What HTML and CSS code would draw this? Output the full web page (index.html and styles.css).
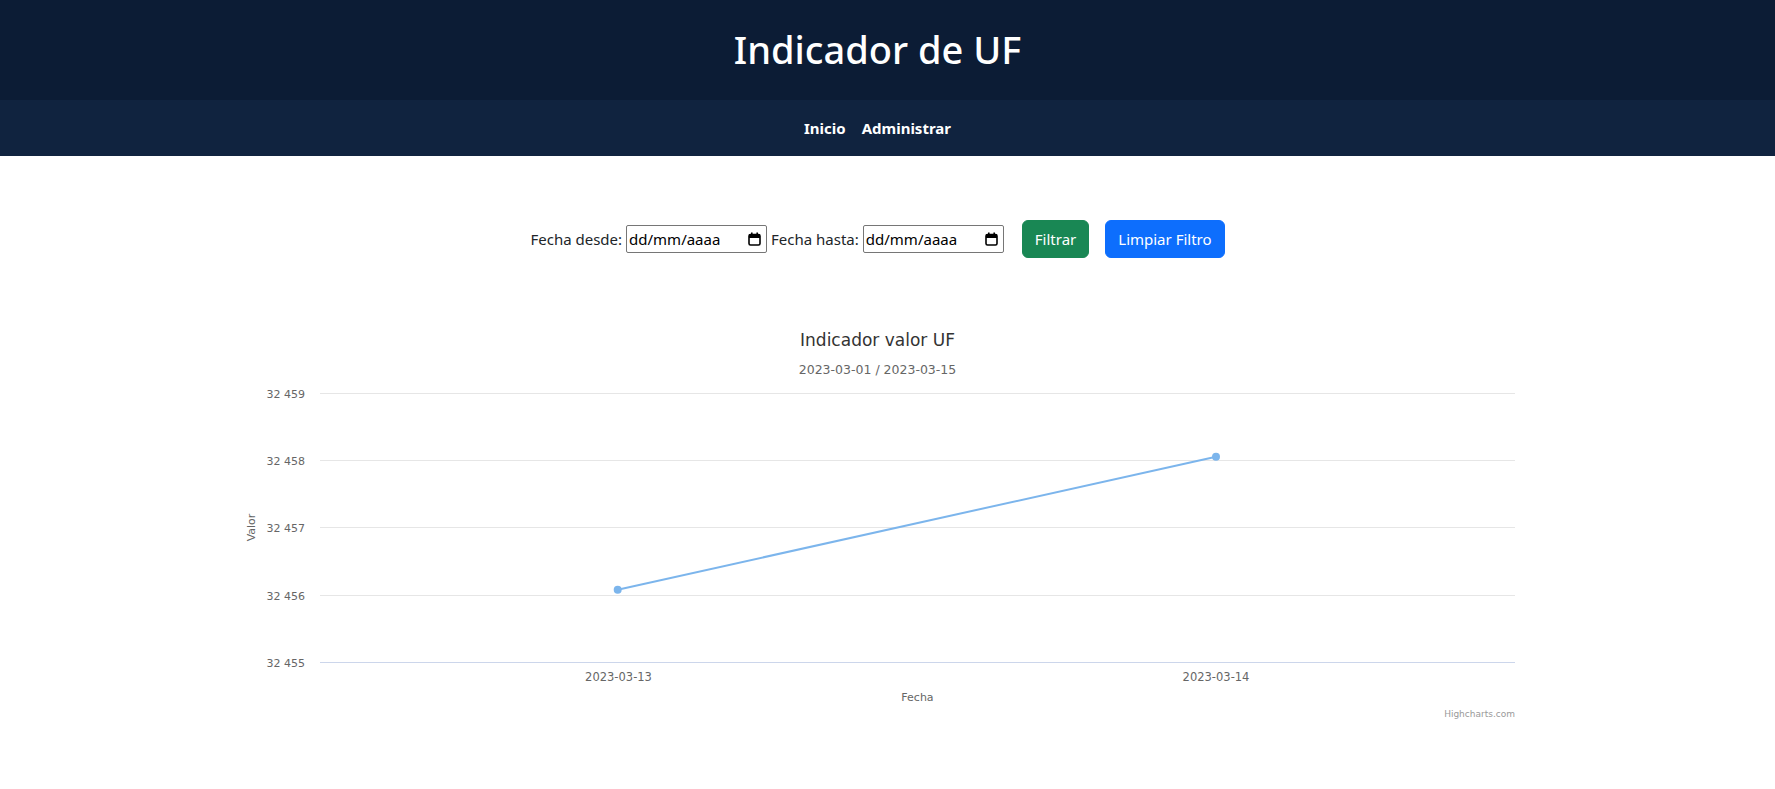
FILE: index.html
```html
<!DOCTYPE html>
<html lang="es">
<head>
<meta charset="utf-8">
<title>Indicador de UF</title>
<link rel="stylesheet" href="styles.css">
</head>
<body>
<header class="top">
  <h1 class="top-title">Indicador de UF</h1>
</header>
<nav class="menu">
  <a class="menu-link" href="#">Inicio</a>
  <a class="menu-link" href="#">Administrar</a>
</nav>
<main class="content">
  <form class="filters">
    <div class="field">
      <span class="field-label">Fecha desde:</span>
      <div class="date-input">
        <span class="date-text">dd/mm/aaaa</span>
        <svg class="cal-icon" width="13" height="14" viewBox="0 0 13 14"><rect x="1" y="2.5" width="11" height="10.5" rx="1.5" fill="none" stroke="#000" stroke-width="1.6"/><rect x="1" y="2.5" width="11" height="3.5" fill="#000"/><rect x="3" y="0.5" width="1.6" height="3" fill="#000"/><rect x="8.4" y="0.5" width="1.6" height="3" fill="#000"/></svg>
      </div>
    </div>
    <div class="field">
      <span class="field-label">Fecha hasta:</span>
      <div class="date-input">
        <span class="date-text">dd/mm/aaaa</span>
        <svg class="cal-icon" width="13" height="14" viewBox="0 0 13 14"><rect x="1" y="2.5" width="11" height="10.5" rx="1.5" fill="none" stroke="#000" stroke-width="1.6"/><rect x="1" y="2.5" width="11" height="3.5" fill="#000"/><rect x="3" y="0.5" width="1.6" height="3" fill="#000"/><rect x="8.4" y="0.5" width="1.6" height="3" fill="#000"/></svg>
      </div>
    </div>
    <div class="actions">
      <button type="button" class="btn btn-success">Filtrar</button>
      <button type="button" class="btn btn-primary">Limpiar Filtro</button>
    </div>
  </form>

  <div class="chart">
    <svg class="chart-svg" width="1295" height="410" viewBox="0 0 1295 410">
      <text class="c-title" x="647.5" y="31" text-anchor="middle">Indicador valor UF</text>
      <text class="c-subtitle" x="647.5" y="58.5" text-anchor="middle">2023-03-01 / 2023-03-15</text>

      <g class="grid">
        <line x1="90" x2="1285" y1="78.5" y2="78.5"/>
        <line x1="90" x2="1285" y1="145.5" y2="145.5"/>
        <line x1="90" x2="1285" y1="212.5" y2="212.5"/>
        <line x1="90" x2="1285" y1="280.5" y2="280.5"/>
      </g>
      <line class="x-axis" x1="90" x2="1285" y1="347.5" y2="347.5"/>

      <g class="y-labels">
        <text x="75" y="82.5" text-anchor="end">32 459</text>
        <text x="75" y="149.5" text-anchor="end">32 458</text>
        <text x="75" y="216.5" text-anchor="end">32 457</text>
        <text x="75" y="284.5" text-anchor="end">32 456</text>
        <text x="75" y="351.5" text-anchor="end">32 455</text>
      </g>
      <text class="axis-title" transform="translate(25 212.5) rotate(-90)" text-anchor="middle">Valor</text>

      <g class="x-labels">
        <text x="388.5" y="366" text-anchor="middle">2023-03-13</text>
        <text x="986" y="366" text-anchor="middle">2023-03-14</text>
      </g>
      <text class="axis-title" x="687.5" y="386" text-anchor="middle">Fecha</text>

      <polyline class="series" points="387.7,274.7 986,141.7"/>
      <circle class="marker" cx="387.7" cy="274.7" r="4"/>
      <circle class="marker" cx="986" cy="141.7" r="4"/>

      <text class="credits" x="1285" y="402" text-anchor="end">Highcharts.com</text>
    </svg>
  </div>
</main>
</body>
</html>
```
FILE: styles.css
```css
* { box-sizing: border-box; }

body {
  margin: 0;
  font-family: "Noto Sans", "Open Sans", sans-serif;
  color: #212529;
  background: #fff;
}

.top {
  background: #0c1c35;
  height: 100px;
  display: flex;
  align-items: center;
  justify-content: center;
  padding-right: 20px;
}

.top-title {
  margin: 0;
  color: #fff;
  font-size: 38px;
  font-weight: 500;
  line-height: 1.2;
}

.menu {
  background: #10233f;
  height: 56px;
  display: flex;
  align-items: center;
  justify-content: center;
  gap: 16px;
  padding-right: 20px;
}

.menu-link {
  color: #fff;
  text-decoration: none;
  font-weight: 700;
  font-size: 15px;
}

.content {
  padding-right: 20px;
}

.filters {
  margin: 64px 0 0;
  height: 38px;
  display: flex;
  align-items: center;
  justify-content: center;
  font-size: 15px;
}

.field {
  display: flex;
  align-items: center;
  gap: 4px;
  margin-right: 4px;
}

.field-label {
  color: #212529;
  white-space: nowrap;
}

.date-input {
  width: 141px;
  height: 28px;
  border: 1px solid #767676;
  border-radius: 2px;
  display: flex;
  align-items: center;
  justify-content: space-between;
  padding: 0 5px 0 2px;
  color: #000;
}

.date-text {
  font-size: 15px;
}

.cal-icon {
  display: block;
}

.actions {
  display: flex;
  gap: 16px;
  margin-left: 14px;
}

.btn {
  height: 38px;
  padding: 0 12px;
  border: 1px solid transparent;
  border-radius: 6px;
  color: #fff;
  font-family: inherit;
  font-size: 15px;
  line-height: 1;
  white-space: nowrap;
  cursor: pointer;
}

.btn-success {
  background: #198754;
  border-color: #198754;
}

.btn-primary {
  background: #0d6efd;
  border-color: #0d6efd;
}

.chart {
  margin-top: 57px;
  display: flex;
  justify-content: center;
}

.chart-svg {
  display: block;
  font-family: "DejaVu Sans", Verdana, sans-serif;
}

.c-title {
  font-size: 17px;
  fill: #333333;
}

.c-subtitle {
  font-size: 12.5px;
  fill: #666666;
}

.grid line {
  stroke: #e6e6e6;
  stroke-width: 1;
}

.x-axis {
  stroke: #ccd6eb;
  stroke-width: 1;
}

.y-labels text {
  font-size: 11px;
  fill: #666666;
}

.x-labels text {
  font-size: 11.5px;
  fill: #666666;
}

.axis-title {
  font-size: 11px;
  fill: #666666;
}

.series {
  fill: none;
  stroke: #7cb5ec;
  stroke-width: 2;
}

.marker {
  fill: #7cb5ec;
}

.credits {
  font-size: 9px;
  fill: #999999;
}
```
